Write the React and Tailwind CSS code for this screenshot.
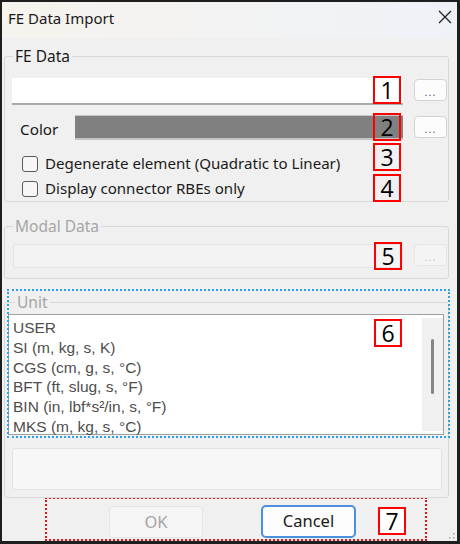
import React from "react";

const FONT = "font-['Noto_Sans','Open_Sans',sans-serif]";

function Mark({ n, className = "" }) {
  return (
    <div
      className={`absolute w-[28px] h-[28px] border-2 border-[#ff0000] flex items-center justify-center text-[23px] leading-none text-black font-['Open_Sans',sans-serif] ${className}`}
    >
      {n}
    </div>
  );
}

function DotsButton({ disabled }) {
  return (
    <div
      className={`w-[33px] h-[22px] rounded-[4px] border flex items-end justify-center pb-[3px] text-[11px] leading-none tracking-[1px] ${
        disabled
          ? "bg-[#f4f4f4] border-[#e6e6e6] text-[#c4c4c4]"
          : "bg-[#fcfcfc] border-[#d2d2d2] text-[#6a5a8a]"
      }`}
    >
      ...
    </div>
  );
}

function Checkbox({ label }) {
  return (
    <div className="flex items-center h-[25px] pl-[10px]">
      <div className="w-[16px] h-[16px] rounded-[3px] border border-[#5c5c5c] bg-[#f6f6f6]" />
      <span className="ml-[7px] text-[15.1px] text-[#1a1a1a]">{label}</span>
    </div>
  );
}

const units = [
  "USER",
  "SI (m, kg, s, K)",
  "CGS (cm, g, s, °C)",
  "BFT (ft, slug, s, °F)",
  "BIN (in, lbf*s²/in, s, °F)",
  "MKS (m, kg, s, °C)",
];

export default function App() {
  return (
    <div
      className={`relative w-[460px] h-[544px] border-t-2 border-l-2 border-r-[3px] border-b-[3px] border-[#1e1e1e] bg-[#f0f0f0] overflow-hidden ${FONT}`}
    >
      {/* Title bar */}
      <div className="h-[36px] flex items-center justify-between pl-[6px] pr-[5px] pb-[4px] bg-gradient-to-r from-[#f7f3ee] to-[#eef2f7]">
        <span className="text-[15px] text-[#1a1a1a]">FE Data Import</span>
        <svg width="14" height="14" viewBox="0 0 14 14" className="mb-[2px]">
          <path d="M1 1 L13 13 M13 1 L1 13" stroke="#222" strokeWidth="1.3" fill="none" />
        </svg>
      </div>

      {/* FE Data */}
      <fieldset className="mt-[8px] ml-[2px] w-[445px] border border-[#d9d9d9] rounded-[3px] pl-[7px] pr-0">
        <legend className="ml-[1px] px-[2px] text-[15.5px] leading-[20px] text-[#1a1a1a]">FE Data</legend>
        <div className="mt-[12px] flex items-start">
          <div className="relative w-[391px] h-[27px] bg-white border-b-2 border-[#a9a9a9]">
            <Mark n="1" className="right-[2px] top-[-2px] bg-white" />
          </div>
          <div className="ml-[11px] mt-[1px]">
            <DotsButton />
          </div>
        </div>
        <div className="mt-[10px] flex items-start">
          <div className="w-[63px] pl-[8px] pt-[2px] text-[15.3px] leading-[24px] text-[#1a1a1a]">Color</div>
          <div className="relative w-[328px] h-[25px] bg-[#808080] border-t border-[#c8c8c8] border-b-2 border-b-[#c4c4c4]">
            <Mark n="2" className="right-[2px] top-[-3px]" />
          </div>
          <div className="ml-[11px] mt-[1px]">
            <DotsButton />
          </div>
        </div>
        <div className="mt-[10px] relative">
          <Checkbox label="Degenerate element (Quadratic to Linear)" />
          <Mark n="3" className="left-[361px] top-[-8px]" />
        </div>
        <div className="relative">
          <Checkbox label="Display connector RBEs only" />
          <Mark n="4" className="left-[361px] top-[-2px]" />
        </div>
      </fieldset>

      {/* Modal Data */}
      <fieldset className="mt-[14px] ml-[2px] w-[445px] border border-[#d9d9d9] rounded-[3px] pl-[7px] pr-0 pb-[10px]">
        <legend className="ml-[1px] px-[2px] text-[15.5px] leading-[20px] text-[#a6a6a6]">Modal Data</legend>
        <div className="mt-[8px] flex items-start">
          <div className="relative w-[390px] h-[24px] ml-[1px] bg-[#f3f3f3] border border-[#e4e4e4] rounded-[2px]">
            <Mark n="5" className="right-[0px] top-[-3px]" />
          </div>
          <div className="ml-[11px]">
            <DotsButton disabled />
          </div>
        </div>
      </fieldset>

      {/* Unit */}
      <div className="relative mt-[13px]">
        <fieldset className="ml-[2px] w-[445px] border border-[#d9d9d9] rounded-[3px] pl-[3px] pr-[3px] pb-[7px]">
          <legend className="ml-[7px] px-[2px] text-[15.5px] leading-[20px] text-[#a6a6a6]">Unit</legend>
          <div className="relative mt-[2px] w-[436px] h-[121px] bg-white border border-[#a0a0a0] flex">
            <div className="flex-1 pl-[4px] pt-[3px] font-['Liberation_Sans',Arial,sans-serif]">
              {units.map((u) => (
                <div key={u} className="text-[15.5px] leading-[19.8px] text-[#4d4d4d] whitespace-nowrap">
                  {u}
                </div>
              ))}
            </div>
            <div className="w-[21px] my-[3px] bg-[#f0f0f0] flex justify-center pt-[21px]">
              <div className="w-[3px] h-[55px] rounded-full bg-[#858585]" />
            </div>
            <Mark n="6" className="right-[41px] top-[4px] bg-white" />
          </div>
          <div className="mt-[13px] ml-[4px] w-[430px] h-[42px] bg-[#f7f7f7] border border-[#e4e4e4] rounded-[3px]" />
        </fieldset>
        <div className="absolute left-[5px] top-[-3px] w-[443px] h-[149px] border-2 border-dotted border-[#2ba3e6] pointer-events-none" />
      </div>

      {/* Buttons */}
      <div className="mt-[-1px] ml-[43px] w-[382px] h-[44px] border-2 border-dotted border-[#ee1111] flex items-start">
        <div className="ml-[62px] mt-[7px] w-[94px] h-[32px] rounded-[4px] bg-[#f5f5f5] border border-[#e6e6e6] flex items-center justify-center text-[16.5px] text-[#a3a3a3]">
          OK
        </div>
        <div className="ml-[58px] mt-[6px] w-[95px] h-[33px] rounded-[5px] bg-[#fdfdfd] border-2 border-[#4a90dc] flex items-center justify-center text-[16.5px] text-[#1a1a1a]">
          Cancel
        </div>
        <div className="relative ml-[22px] mt-[8px] w-[28px] h-[28px]">
          <Mark n="7" className="left-0 top-0 bg-white" />
        </div>
      </div>

      {/* resize grip */}
      <svg width="8" height="8" viewBox="0 0 8 8" className="absolute right-[1px] bottom-[1px]">
        <rect x="5" y="1" width="1.5" height="1.5" fill="#a0a0a0" />
        <rect x="1" y="5" width="1.5" height="1.5" fill="#a0a0a0" />
        <rect x="5" y="5" width="1.5" height="1.5" fill="#a0a0a0" />
      </svg>
    </div>
  );
}
